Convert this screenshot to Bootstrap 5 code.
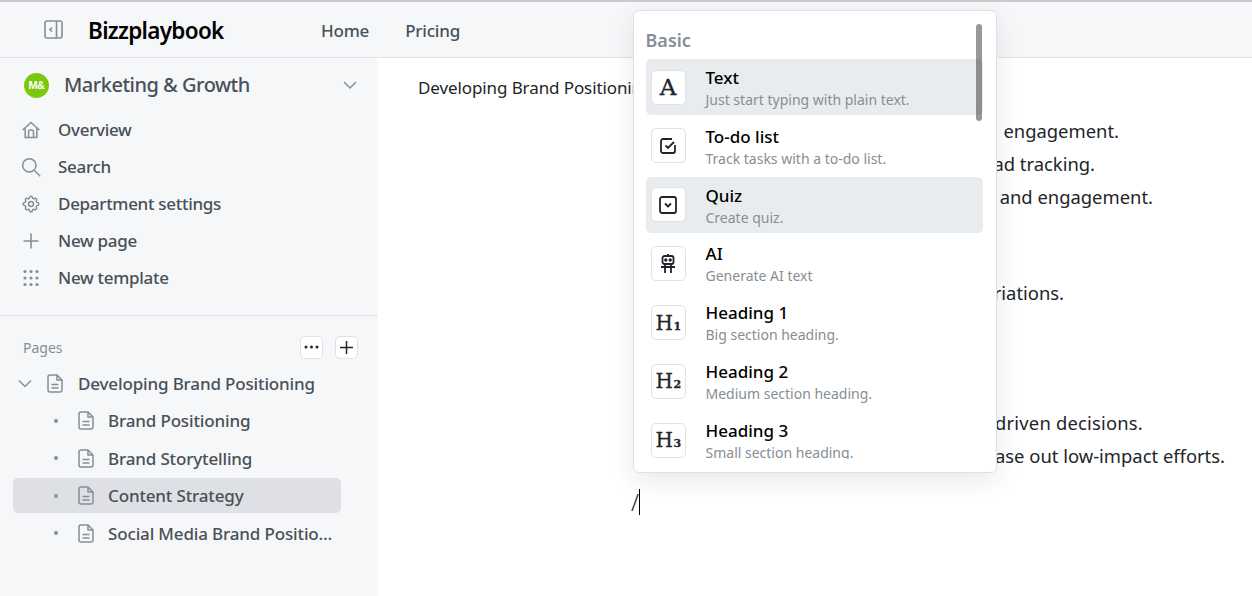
<!DOCTYPE html>
<html lang="en">
<head>
<meta charset="utf-8">
<title>Bizzplaybook</title>
<link href="https://cdn.jsdelivr.net/npm/bootstrap@5.3.0/dist/css/bootstrap.min.css" rel="stylesheet">
<style>
html,body{height:100%;overflow:hidden}
body{font-family:"Noto Sans",sans-serif;font-size:17px;background:#fff;color:#212529;border-top:2px solid #c9cacd}
svg{display:block;flex:none}
.top-bar{height:56px;padding-top:2px;background:#f6f7f9;border-bottom:1px solid #e1e3e7}
.panel-btn{margin-left:44px;margin-right:25px;width:19px;margin-bottom:2px}
.brand-name{font-size:22.500px;font-weight:600;color:#000;width:233px;letter-spacing:-.7px}
.top-link{font-size:17px;font-weight:500;color:#495057;text-decoration:none;margin-right:36px;letter-spacing:-.2px}
.shell{height:538px;position:relative}
.side{width:378px;background:#f6f7f9;flex:none;color:#495057}
.dept{height:54px;padding:0 20px 0 24px}
.dept-ava{width:25px;height:25px;background:#7ac70c;color:#fff;font:700 11px "Liberation Sans",sans-serif;letter-spacing:-.5px}
.dept-name{font-size:20px;font-weight:500;margin-left:15px;color:#495057;letter-spacing:-.5px}
.side-rows{padding-left:21px;height:185px;margin-top:-1px}
.side-row{height:37px;gap:17px;font-weight:500;font-size:17px;letter-spacing:-.3px}
.side-rule{border-top:1px solid #e1e3e7;margin-top:19px}
.pages-head{height:32px;margin-top:15px;margin-bottom:1.500px;padding:0 20px 0 23px;color:#868e96;font-size:14px}
.mini-btn{width:23px;height:23px;border:1px solid #dee2e6;border-radius:5px;background:#fff;padding:0;color:#212529}
.gap-mini{margin-right:12px}
.tree-row{height:37.500px;font-weight:500;font-size:17px;margin:0 37px 0 13px;border-radius:5px;color:#495057;letter-spacing:-.15px}
.tree-row.is-current{background:#dee0e5;height:35px;margin-top:1px;margin-bottom:1.500px}
.tree-root{padding-left:5px}
.tree-root .doc-gap{margin-left:15px;margin-right:15px}
.tree-kid{padding-left:41px}
.tree-dot{width:4px;height:4px;border-radius:50%;background:#868e96;margin-right:20px;flex:none}
.tree-kid .doc-gap{margin-right:14px}
.tree-label{white-space:nowrap;overflow:hidden;text-overflow:ellipsis;min-width:0;padding-right:5px}
.doc-area{padding:13px 0 0 40px;font-size:18.400px;color:#212529;min-width:0;overflow:hidden;white-space:nowrap}
.doc-line{height:33px;line-height:33px;text-align:right}
.doc-title{margin-bottom:10px;font-size:17px;text-align:left;letter-spacing:-.1px}
.m1{margin-right:133px}
.m2{margin-right:157px}
.m3{margin-right:99px}
.m4{margin-right:188px}
.m5{margin-right:109px;letter-spacing:.2px}
.m6{margin-right:27px}
.gap-a{margin-top:63px}
.gap-b{margin-top:97px}
.slash-line{margin-top:17px;margin-left:213px;height:26px;line-height:26px;font-size:23px;font-weight:300}
.caret-mark{display:inline-block;width:1px;height:26px;background:#000;vertical-align:top}
.slash-menu{position:absolute;left:632.500px;top:-48px;width:364.500px;height:463px;background:#fff;border:1px solid #dee2e6;border-radius:6px;box-shadow:0 8px 24px rgba(30,40,60,.1);overflow:hidden;padding:0 13px 12px 12px}
.slash-clip{height:448px;overflow:hidden}
.menu-cap{font-size:18px;font-weight:600;color:#868e96;height:48px;padding-top:16px;line-height:26px}
.menu-item{height:56px;margin-bottom:2.900px;border-radius:5px;padding-left:5px}
.menu-item.is-lit{background:#e9ecef}
.menu-ico{width:35px;height:35px;border:1px solid #dee2e6;border-radius:5px;background:#fff;margin-right:20px;color:#212529;flex:none}
.menu-title{font-size:17px;font-weight:500;color:#000;line-height:22px;margin-top:2.500px}
.menu-sub{font-size:14px;color:#868e96;line-height:20px;margin-top:1px}
.glyph-h{font:400 20px "DejaVu Serif",serif;line-height:1;letter-spacing:-.5px;-webkit-text-stroke:.3px #212529}
.glyph-h sub{font-size:11px;font-weight:700;vertical-align:baseline;position:static;margin-left:1px}
.glyph-a{font:400 23px "DejaVu Serif",serif;line-height:1;-webkit-text-stroke:.4px #212529}
.menu-thumb{position:absolute;left:342px;top:13px;width:6px;height:97px;border-radius:3px;background:rgba(0,0,0,.4)}
</style>
</head>
<body>
<header class="top-bar d-flex align-items-center">
  <div class="panel-btn"><svg width="19" height="19" viewBox="0 0 19 19" fill="none" stroke="#868e96" stroke-width="1.6"><rect x="1" y="1" width="17" height="17" rx="2"/><path d="M12.500 1v17M8 7.500l-2 2 2 2"/></svg></div>
  <div class="brand-name">Bizzplaybook</div>
  <a class="top-link" href="#">Home</a>
  <a class="top-link" href="#">Pricing</a>
</header>
<div class="shell d-flex">
  <aside class="side">
    <div class="dept d-flex align-items-center">
      <div class="dept-ava rounded-circle d-flex align-items-center justify-content-center">M&amp;</div>
      <div class="dept-name flex-grow-1">Marketing &amp; Growth</div>
      <svg width="16" height="10" viewBox="0 0 16 10" fill="none" stroke="#868e96" stroke-width="1.5"><path d="M2 2l6 6 6-6"/></svg>
    </div>
    <div class="side-rows">
      <div class="side-row d-flex align-items-center"><svg width="20" height="20" viewBox="0 0 24 24" fill="none" stroke="#868e96" stroke-width="1.8"><path d="M2 12L12 3l10 9M5 10v11h14V10M9 21v-7a2 2 0 0 1 2-2h2a2 2 0 0 1 2 2v7"/></svg><span>Overview</span></div>
      <div class="side-row d-flex align-items-center"><svg width="20" height="20" viewBox="0 0 24 24" fill="none" stroke="#868e96" stroke-width="1.8"><circle cx="10" cy="10" r="8"/><path d="M16 16l7 7"/></svg><span>Search</span></div>
      <div class="side-row d-flex align-items-center"><svg width="20" height="20" viewBox="0 0 24 24" fill="none" stroke="#868e96" stroke-width="1.8"><path d="M10.300 4.300a1.700 1.700 0 0 1 3.400 0 1.700 1.700 0 0 0 2.600 1.100 1.700 1.700 0 0 1 2.300 2.300 1.700 1.700 0 0 0 1.100 2.600 1.700 1.700 0 0 1 0 3.400 1.700 1.700 0 0 0-1.100 2.600 1.700 1.700 0 0 1-2.300 2.300 1.700 1.700 0 0 0-2.600 1.100 1.700 1.700 0 0 1-3.400 0 1.700 1.700 0 0 0-2.600-1.100 1.700 1.700 0 0 1-2.300-2.300 1.700 1.700 0 0 0-1.100-2.600 1.700 1.700 0 0 1 0-3.400 1.700 1.700 0 0 0 1.100-2.600 1.700 1.700 0 0 1 2.300-2.300 1.700 1.700 0 0 0 2.600-1.100z"/><circle cx="12" cy="12" r="3"/></svg><span>Department settings</span></div>
      <div class="side-row d-flex align-items-center"><svg width="20" height="20" viewBox="0 0 20 20" fill="none" stroke="#868e96" stroke-width="1.6"><path d="M10 2.500v15M2.500 10h15"/></svg><span>New page</span></div>
      <div class="side-row d-flex align-items-center"><svg width="20" height="20" viewBox="0 0 20 20" fill="#868e96"><circle cx="4" cy="3.500" r="1.600"/><circle cx="10" cy="3.500" r="1.600"/><circle cx="16" cy="3.500" r="1.600"/><circle cx="4" cy="10" r="1.600"/><circle cx="10" cy="10" r="1.600"/><circle cx="16" cy="10" r="1.600"/><circle cx="4" cy="16.500" r="1.600"/><circle cx="10" cy="16.500" r="1.600"/><circle cx="16" cy="16.500" r="1.600"/></svg><span>New template</span></div>
    </div>
    <div class="side-rule"></div>
    <div class="pages-head d-flex align-items-center">
      <span class="flex-grow-1">Pages</span>
      <button class="mini-btn gap-mini d-flex align-items-center justify-content-center" type="button" aria-label="More"><svg width="15" height="4" viewBox="0 0 15 4" fill="#212529"><circle cx="2" cy="2" r="1.500"/><circle cx="7.500" cy="2" r="1.500"/><circle cx="13" cy="2" r="1.500"/></svg></button>
      <button class="mini-btn d-flex align-items-center justify-content-center" type="button" aria-label="Add"><svg width="15" height="15" viewBox="0 0 15 15" fill="none" stroke="#212529" stroke-width="1.500"><path d="M7.500 1v13M1 7.500h13"/></svg></button>
    </div>
    <div class="tree-row tree-root d-flex align-items-center">
      <svg width="14" height="9" viewBox="0 0 14 9" fill="none" stroke="#868e96" stroke-width="1.500"><path d="M1 1.500l6 6 6-6"/></svg>
      <svg class="doc-gap" width="16" height="19" viewBox="0 0 16 19" fill="none" stroke="#868e96" stroke-width="1.500"><path d="M10 1H3a2 2 0 0 0-2 2v13a2 2 0 0 0 2 2h10a2 2 0 0 0 2-2V6zM10 1v5h5M4.500 10.500h7M4.500 14h7"/></svg>
      <span class="tree-label">Developing Brand Positioning</span>
    </div>
    <div class="tree-row tree-kid d-flex align-items-center"><span class="tree-dot"></span><svg class="doc-gap" width="16" height="19" viewBox="0 0 16 19" fill="none" stroke="#868e96" stroke-width="1.500"><path d="M10 1H3a2 2 0 0 0-2 2v13a2 2 0 0 0 2 2h10a2 2 0 0 0 2-2V6zM10 1v5h5M4.500 10.500h7M4.500 14h7"/></svg><span class="tree-label">Brand Positioning</span></div>
    <div class="tree-row tree-kid d-flex align-items-center"><span class="tree-dot"></span><svg class="doc-gap" width="16" height="19" viewBox="0 0 16 19" fill="none" stroke="#868e96" stroke-width="1.500"><path d="M10 1H3a2 2 0 0 0-2 2v13a2 2 0 0 0 2 2h10a2 2 0 0 0 2-2V6zM10 1v5h5M4.500 10.500h7M4.500 14h7"/></svg><span class="tree-label">Brand Storytelling</span></div>
    <div class="tree-row tree-kid is-current d-flex align-items-center"><span class="tree-dot"></span><svg class="doc-gap" width="16" height="19" viewBox="0 0 16 19" fill="none" stroke="#868e96" stroke-width="1.500"><path d="M10 1H3a2 2 0 0 0-2 2v13a2 2 0 0 0 2 2h10a2 2 0 0 0 2-2V6zM10 1v5h5M4.500 10.500h7M4.500 14h7"/></svg><span class="tree-label">Content Strategy</span></div>
    <div class="tree-row tree-kid d-flex align-items-center"><span class="tree-dot"></span><svg class="doc-gap" width="16" height="19" viewBox="0 0 16 19" fill="none" stroke="#868e96" stroke-width="1.500"><path d="M10 1H3a2 2 0 0 0-2 2v13a2 2 0 0 0 2 2h10a2 2 0 0 0 2-2V6zM10 1v5h5M4.500 10.500h7M4.500 14h7"/></svg><span class="tree-label">Social Media Brand Positioning</span></div>
  </aside>
  <main class="doc-area flex-grow-1">
    <div class="doc-line doc-title">Developing Brand Positioning</div>
    <div class="doc-line m1">engagement.</div>
    <div class="doc-line m2">lead tracking.</div>
    <div class="doc-line m3">and engagement.</div>
    <div class="doc-line m4 gap-a">variations.</div>
    <div class="doc-line m5 gap-b">data-driven decisions.</div>
    <div class="doc-line m6">phase out low-impact efforts.</div>
    <div class="slash-line">/<span class="caret-mark"></span></div>
  </main>
  <div class="slash-menu">
    <div class="slash-clip">
      <div class="menu-cap">Basic</div>
      <div class="menu-item is-lit d-flex align-items-center"><div class="menu-ico d-flex align-items-center justify-content-center"><span class="glyph-a">A</span></div><div><div class="menu-title">Text</div><div class="menu-sub">Just start typing with plain text.</div></div></div>
      <div class="menu-item d-flex align-items-center"><div class="menu-ico d-flex align-items-center justify-content-center"><svg width="18" height="18" viewBox="0 0 18 18" fill="none" stroke="#212529" stroke-width="1.800"><path d="M16 8v6a2 2 0 0 1-2 2H4a2 2 0 0 1-2-2V4a2 2 0 0 1 2-2h9M6.500 8.500l2.500 2.500 6-6"/></svg></div><div><div class="menu-title">To-do list</div><div class="menu-sub">Track tasks with a to-do list.</div></div></div>
      <div class="menu-item is-lit d-flex align-items-center"><div class="menu-ico d-flex align-items-center justify-content-center"><svg width="18" height="18" viewBox="0 0 18 18" fill="none" stroke="#212529" stroke-width="1.800"><rect x="1" y="1" width="16" height="16" rx="2"/><path d="M6 7.500l3 3 3-3"/></svg></div><div><div class="menu-title">Quiz</div><div class="menu-sub">Create quiz.</div></div></div>
      <div class="menu-item d-flex align-items-center"><div class="menu-ico d-flex align-items-center justify-content-center"><svg width="16" height="21" viewBox="0 0 16 21" fill="none" stroke="#212529" stroke-width="1.800"><rect x="2.500" y="3" width="11" height="8" rx="2"/><path d="M8 1v2M1 14h14M5 11v9M11 11v9"/><circle cx="5.800" cy="7" r=".8" fill="#212529"/><circle cx="10.200" cy="7" r=".8" fill="#212529"/></svg></div><div><div class="menu-title">AI</div><div class="menu-sub">Generate AI text</div></div></div>
      <div class="menu-item d-flex align-items-center"><div class="menu-ico d-flex align-items-center justify-content-center"><span class="glyph-h">H<sub>1</sub></span></div><div><div class="menu-title">Heading 1</div><div class="menu-sub">Big section heading.</div></div></div>
      <div class="menu-item d-flex align-items-center"><div class="menu-ico d-flex align-items-center justify-content-center"><span class="glyph-h">H<sub>2</sub></span></div><div><div class="menu-title">Heading 2</div><div class="menu-sub">Medium section heading.</div></div></div>
      <div class="menu-item d-flex align-items-center"><div class="menu-ico d-flex align-items-center justify-content-center"><span class="glyph-h">H<sub>3</sub></span></div><div><div class="menu-title">Heading 3</div><div class="menu-sub">Small section heading.</div></div></div>
    </div>
    <div class="menu-thumb"></div>
  </div>
</div>
<script src="https://cdn.jsdelivr.net/npm/bootstrap@5.3.0/dist/js/bootstrap.bundle.min.js"></script>
</body>
</html>
